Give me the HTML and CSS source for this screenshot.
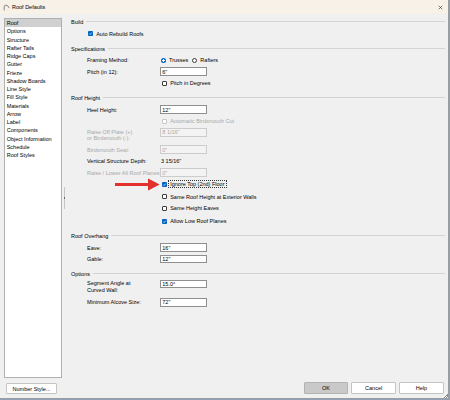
FILE: index.html
```html
<!DOCTYPE html>
<html lang="en">
<head>
  <meta charset="UTF-8" />
  <title>Roof Defaults</title>
  <link rel="stylesheet" href="styles.css">
</head>
<body>
  <div class="window">
    <div class="titlebar">
      <svg class="app-icon" viewBox="0 0 12 12"><path d="M2 11V5Q2 2 5 2Q9 2 10.5 7" /></svg>
      <span class="title">Roof Defaults</span>
      <svg class="close" viewBox="0 0 10 10"><path d="M1.5 1.5l7 7M8.5 1.5l-7 7" /></svg>
    </div>

    <div class="dialog">
      <div class="sidebar">
        <ul class="nav">
          <li class="active">Roof</li>
          <li>Options</li>
          <li>Structure</li>
          <li>Rafter Tails</li>
          <li>Ridge Caps</li>
          <li>Gutter</li>
          <li>Frieze</li>
          <li>Shadow Boards</li>
          <li>Line Style</li>
          <li>Fill Style</li>
          <li>Materials</li>
          <li>Arrow</li>
          <li>Label</li>
          <li>Components</li>
          <li>Object Information</li>
          <li>Schedule</li>
          <li>Roof Styles</li>
        </ul>
        <button class="btn number-style">Number Style...</button>
      </div>

      <div class="splitter"><span class="grip"></span></div>

      <div class="content">
        <div class="form">
          <div class="group-head">Build</div>
          <div class="row">
            <span class="check on"><svg viewBox="0 0 10 10"><path d="M2.3 5.2l1.9 1.9 3.6-4" /></svg></span>
            Auto Rebuild Roofs
          </div>

          <div class="group-head">Specifications</div>
          <div class="row">
            <span class="label">Framing Method:</span>
            <span class="radio on"></span><span class="choice">Trusses</span>
            <span class="radio"></span><span>Rafters</span>
          </div>
          <div class="row">
            <span class="label">Pitch (in 12):</span>
            <span class="field">6"</span>
          </div>
          <div class="row opt">
            <span class="check"></span>Pitch in Degrees
          </div>

          <div class="group-head">Roof Height</div>
          <div class="row">
            <span class="label">Heel Height:</span>
            <span class="field">12"</span>
          </div>
          <div class="row opt off">
            <span class="check"></span>Automatic Birdsmouth Cut
          </div>
          <div class="row tall off">
            <span class="label">Raise Off Plate (+)<br>or Birdsmouth (-):</span>
            <span class="field">8 1/16"</span>
          </div>
          <div class="row off">
            <span class="label">Birdsmouth Seat:</span>
            <span class="field">0"</span>
          </div>
          <div class="row">
            <span class="label">Vertical Structure Depth:</span>
            <span class="value">3 15/16"</span>
          </div>
          <div class="row off">
            <span class="label">Raise / Lower All Roof Planes:</span>
            <span class="field">0"</span>
          </div>
          <div class="row opt">
            <span class="check on"><svg viewBox="0 0 10 10"><path d="M2.3 5.2l1.9 1.9 3.6-4" /></svg></span>
            <span class="focus">Ignore Top (2nd) Floor</span>
          </div>
          <div class="row opt loose">
            <span class="check"></span>Same Roof Height at Exterior Walls
          </div>
          <div class="row opt">
            <span class="check"></span>Same Height Eaves
          </div>
          <div class="row opt loose">
            <span class="check on"><svg viewBox="0 0 10 10"><path d="M2.3 5.2l1.9 1.9 3.6-4" /></svg></span>
            Allow Low Roof Planes
          </div>

          <div class="group-head">Roof Overhang</div>
          <div class="row">
            <span class="label">Eave:</span>
            <span class="field">16"</span>
          </div>
          <div class="row">
            <span class="label">Gable:</span>
            <span class="field">12"</span>
          </div>

          <div class="group-head">Options</div>
          <div class="row tall first">
            <span class="label">Segment Angle at<br>Curved Wall:</span>
            <span class="field">15.0°</span>
          </div>
          <div class="row alcove">
            <span class="label">Minimum Alcove Size:</span>
            <span class="field">72"</span>
          </div>
        </div>

        <div class="actions">
          <button class="btn default">OK</button>
          <button class="btn">Cancel</button>
          <button class="btn">Help</button>
        </div>
      </div>
    </div>

    <!-- callout arrow pointing at the option -->
    <svg class="callout" viewBox="0 0 48 15"><polygon points="2,6 35,6 35,1.5 46.5,7.5 35,13.5 35,9 2,9" /></svg>

    <svg class="resize" viewBox="0 0 4 4"><path d="M3 0h1v1H3zM2 1h1v1H2zM3 1h1v1H3zM1 2h1v1H1zM3 2h1v1H3zM0 3h1v1H0zM2 3h1v1H2z" /></svg>
  </div>
</body>
</html>
```

FILE: styles.css
```css
body {
  margin: 0;
  background: #8ea3ba;
  font-family: "Liberation Sans", Arial, sans-serif;
  font-size: 5.5px;
  color: #000;
}

.window {
  position: relative;
  width: 449px;
  height: 399px;
  box-sizing: border-box;
  border-right: 1px solid #9c9c9c;
  border-bottom: 1px solid #9c9c9c;
  background: #f0f0f0;
  display: flex;
  flex-direction: column;
}

.titlebar {
  height: 14px;
  flex-shrink: 0;
  background: #f8f1e7;
  display: flex;
  align-items: center;
  padding: 0 5px 0 3px;
}

.app-icon {
  width: 7px;
  height: 7px;
  fill: none;
  stroke: #5a5a5a;
  stroke-width: 1.2;
}

.title {
  flex: 1;
  margin-left: 2px;
}

.close {
  width: 5px;
  height: 5px;
  stroke: #333;
  stroke-width: 1.3;
}

.dialog {
  flex: 1;
  display: flex;
  min-height: 0;
}

.sidebar {
  width: 58px;
  padding: 4px 0 4px 4px;
  display: flex;
  flex-direction: column;
}

.nav {
  flex: 1;
  list-style: none;
  margin: 0;
  padding: 0;
  background: #fff;
  border: 1px solid #b0b0b0;
}

.nav li {
  height: 8.25px;
  line-height: 8.25px;
  padding-left: 1.7px;
  white-space: nowrap;
}

.nav li.active {
  background: #d0d0d0;
}

.splitter {
  width: 4px;
  padding: 4px 0 20px;
  display: flex;
  align-items: center;
  justify-content: center;
}

.grip {
  position: relative;
  width: 1px;
  height: 22px;
  background: #c6c6c6;
}

.grip::after {
  content: "";
  position: absolute;
  left: 0;
  top: 10px;
  width: 1px;
  height: 2px;
  background: #6a6a6a;
}

.content {
  flex: 1;
  display: flex;
  flex-direction: column;
  padding: 3.5px 3px 4px 5px;
}

.form {
  flex: 1;
}

.group-head {
  display: flex;
  align-items: center;
  height: 9px;
  margin-top: 6px;
  white-space: nowrap;
}

.group-head:first-child {
  margin-top: 0;
}

.group-head::after {
  content: "";
  flex: 1;
  border-top: 1px solid #d4d4d4;
  margin: -1px 0 0 3px;
}

.row {
  display: flex;
  align-items: center;
  height: 9px;
  margin-top: 2.5px;
  padding-left: 16px;
  white-space: nowrap;
}

.row.loose {
  margin-top: 3.8px;
}

.row.tall {
  align-items: flex-start;
  height: 14.5px;
}

.row.first {
  margin-top: 1px;
}

.row.alcove {
  margin-top: 3.7px;
}

.row.opt {
  padding-left: 90px;
}

.label {
  width: 73px;
  flex-shrink: 0;
}

.tall .label {
  padding-top: 0.7px;
  line-height: 6.7px;
}

.field {
  width: 46.7px;
  height: 8.5px;
  box-sizing: border-box;
  border: 1px solid #8f8f8f;
  background: #fff;
  padding-left: 1.3px;
  display: flex;
  align-items: center;
}

.value {
  padding-left: 1px;
}

.off {
  color: #a8a8a8;
}

.off .field {
  background: #f3f3f3;
  border-color: #cccccc;
}

.off .check {
  border-color: #c6c6c6;
}

.check {
  width: 5px;
  height: 5px;
  box-sizing: border-box;
  border: 1px solid #3c3c3c;
  border-radius: 1px;
  background: #fff;
  margin: 0 3.2px 0 1px;
  flex-shrink: 0;
}

.check.on {
  border: none;
  background: #0061c1;
}

.check svg {
  display: block;
  width: 5px;
  height: 5px;
  fill: none;
  stroke: #fff;
  stroke-width: 1.4;
}

.radio {
  width: 5px;
  height: 5px;
  box-sizing: border-box;
  border: 1px solid #3c3c3c;
  border-radius: 50%;
  background: #fff;
  margin: 0 3px 0 1px;
  flex-shrink: 0;
}

.radio.on {
  border: none;
  background: radial-gradient(circle, #fff 0 1px, #0061c1 1.3px);
}

.choice {
  margin-right: 3px;
}

.focus {
  display: inline-block;
  border: 1px dotted #333;
  padding: 0 1px;
  margin-left: -2px;
  line-height: 6px;
}

.actions {
  display: flex;
  justify-content: flex-end;
  gap: 3.3px;
  padding-right: 1.3px;
}

.btn {
  font: inherit;
  color: #000;
  background: #fff;
  border: 1px solid #c4c4c4;
  border-radius: 1px;
  padding: 0;
}

.actions .btn {
  width: 44.5px;
  height: 12px;
}

.btn.default {
  background: #c9c9c9;
  border-color: #b2b2b2;
}

.number-style {
  width: 51px;
  height: 11px;
  margin: 5px 0 0 2px;
}

.callout {
  position: absolute;
  left: 113px;
  top: 177px;
  width: 48px;
  height: 15px;
  fill: #e3312d;
  filter: drop-shadow(0.5px 0.5px 0.4px rgba(0, 0, 0, 0.35));
}

.resize {
  position: absolute;
  right: 0;
  bottom: 0;
  width: 4px;
  height: 4px;
  fill: #8a8a8a;
}
```
